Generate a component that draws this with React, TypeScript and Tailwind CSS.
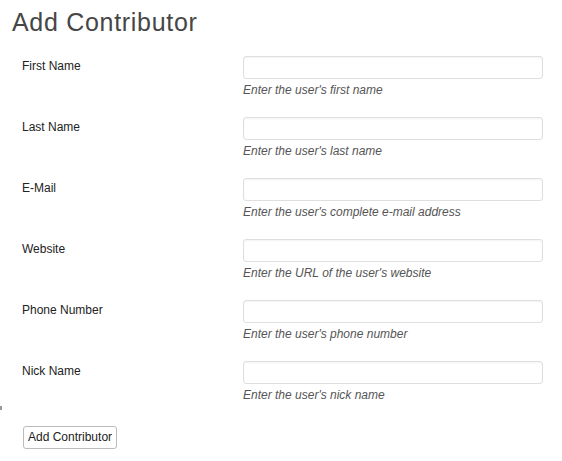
const fields = [
  { label: "First Name", hint: "Enter the user's first name" },
  { label: "Last Name", hint: "Enter the user's last name" },
  { label: "E-Mail", hint: "Enter the user's complete e-mail address" },
  { label: "Website", hint: "Enter the URL of the user's website" },
  { label: "Phone Number", hint: "Enter the user's phone number" },
  { label: "Nick Name", hint: "Enter the user's nick name" },
];

const FieldRow = ({ label, hint }: { label: string; hint: string }) => (
  <div className="flex items-start h-[61px]">
    <label className="w-[231px] pl-[10px] pt-[2px] text-[12px] leading-[16px] text-[#222]">
      {label}
    </label>
    <div className="flex flex-col">
      <input
        type="text"
        className="w-[300px] h-[23px] rounded-[3px] border border-[#dfdfdf] bg-white shadow-[inset_0_1px_2px_rgba(0,0,0,0.05)] outline-none"
      />
      <span className="mt-[3px] text-[12px] leading-[16px] italic text-[#555]">
        {hint}
      </span>
    </div>
  </div>
);

export default function App() {
  return (
    <div
      className="relative min-h-[461px] w-[562px] bg-white pl-[12px]"
      style={{ fontFamily: '"Liberation Sans", Arial, sans-serif' }}
    >
      <h2 className="pt-[8px] text-[25px] leading-[29px] tracking-[0.7px] text-[#464646] font-normal">
        Add Contributor
      </h2>
      <div className="mt-[19px]">
        {fields.map((f) => (
          <FieldRow key={f.label} label={f.label} hint={f.hint} />
        ))}
      </div>
      <span className="absolute left-0 top-[406px] h-[4px] w-[2px] bg-[#999]" />
      <div className="pl-[11px] pt-[2px]">
        <button className="h-[23px] px-[4px] rounded-[3px] border border-[#bbb] bg-white text-[12px] text-[#222]">
          Add Contributor
        </button>
      </div>
    </div>
  );
}
